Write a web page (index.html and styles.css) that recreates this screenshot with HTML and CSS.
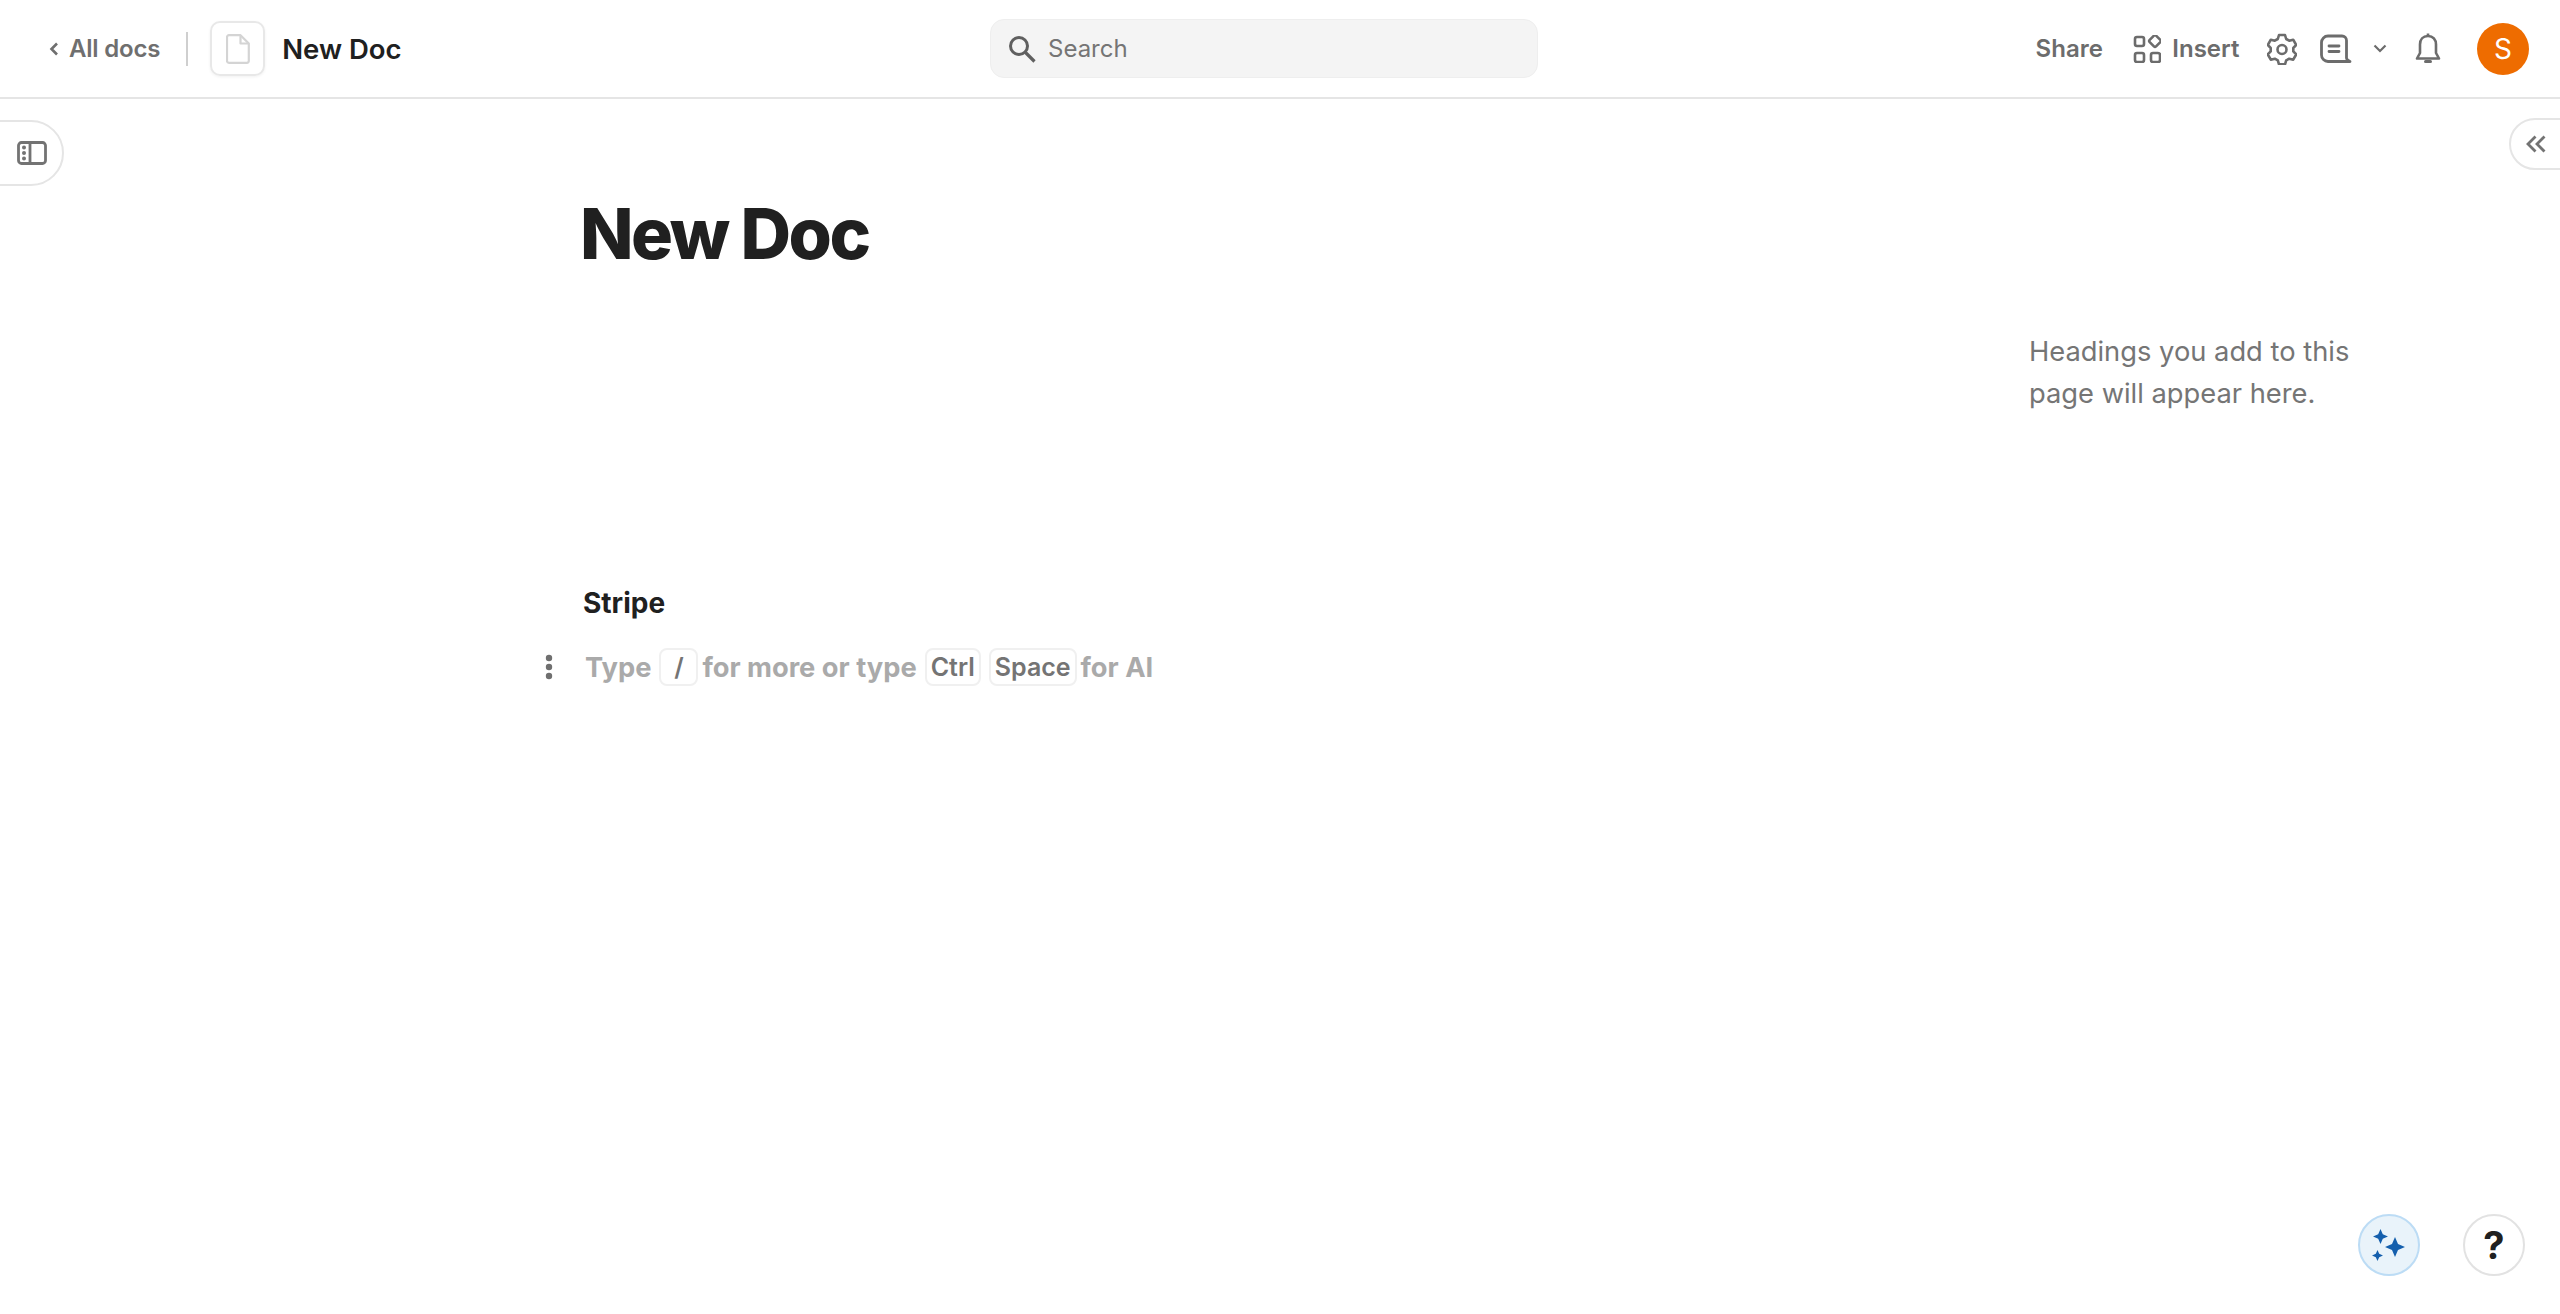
FILE: index.html
```html
<!DOCTYPE html>
<html lang="en">
<head>
<meta charset="utf-8">
<title>New Doc</title>
<link rel="stylesheet" href="styles.css">
</head>
<body>
<header class="topbar">
  <div class="top-left">
    <a class="back"><svg class="chev" width="10" height="16" viewBox="0 0 10 16"><path d="M8 2.500 2.500 8 8 13.500" fill="none" stroke="#6f6f6f" stroke-width="2.600"/></svg>All docs</a>
    <span class="vdiv"></span>
    <span class="docbox"><svg width="24" height="30" viewBox="0 0 24 30" fill="none" stroke="#d4d4d4" stroke-width="2.200" stroke-linejoin="round"><path d="M3 1.200h11.500l8.300 8.300V26.800a2 2 0 0 1-2 2H3a2 2 0 0 1-2-2V3.200a2 2 0 0 1 2-2Z"/><path d="M14.500 1.500v8h8"/></svg></span>
    <span class="docname">New Doc</span>
  </div>
  <div class="search">
    <svg width="28" height="28" viewBox="0 0 28 28"><circle cx="11" cy="11" r="8.500" fill="none" stroke="#5f5f5f" stroke-width="3"/><path d="m17.500 17.500 9 9" stroke="#5f5f5f" stroke-width="3.200" fill="none"/></svg>
    <span>Search</span>
  </div>
  <div class="top-right">
    <span class="share">Share</span>
    <span class="insert">
      <svg width="28" height="28" viewBox="0 0 28 28" fill="none" stroke="#6c6c6c" stroke-width="2.600"><rect x="2" y="2" width="9" height="9" rx="2"/><rect x="2" y="18" width="9" height="9" rx="2"/><rect x="18" y="18" width="9" height="9" rx="2"/><rect x="17.500" y="1.500" width="9" height="9" rx="1.500" transform="rotate(45 22 6)"/></svg>
      Insert
    </span>
    <svg class="gear" width="30" height="32" viewBox="0 0 30 32" fill="none" stroke="#6c6c6c" stroke-width="2.600" stroke-linejoin="round"><path d="M12 2h6l1.200 4 3 1.700 4-1 3 5.300-2.900 3v3.400l2.900 3-3 5.300-4-1-3 1.700-1.200 4h-6l-1.200-4-3-1.700-4 1-3-5.300 2.900-3V15l-2.900-3 3-5.300 4 1 3-1.700Z"/><circle cx="15" cy="16.500" r="4.500"/></svg>
    <svg class="comment" width="32" height="30" viewBox="0 0 32 30" fill="none" stroke="#6c6c6c" stroke-width="2.800" stroke-linecap="round" stroke-linejoin="round"><path d="M8 2h14a4.500 4.500 0 0 1 4.500 4.500V24c0 1.500 1.500 2.500 3.500 3.500H8a6.500 6.500 0 0 1-6.500-6.500V8.500A6.500 6.500 0 0 1 8 2Z"/><path d="M9 12h10M9 17.500h10"/></svg>
    <svg class="caret" width="14" height="10" viewBox="0 0 14 10" fill="none" stroke="#6c6c6c" stroke-width="2.200"><path d="m1.500 1.500 5.500 5.500 5.500-5.500"/></svg>
    <svg class="bell" width="26" height="32" viewBox="0 0 26 32" fill="none" stroke="#6c6c6c" stroke-width="2.600" stroke-linejoin="round"><path d="M13 3c-5 0-8 3.500-8 8.500v8.500L2 25.500h22L21 20v-8.500C21 6.500 18 3 13 3Z"/><path d="M13 .5V3"/><path d="M10.500 28.500h5" stroke-width="3" stroke-linecap="round"/></svg>
    <span class="avatar">S</span>
  </div>
</header>

<button class="toggle toggle-left"><svg width="30" height="24" viewBox="0 0 30 24" fill="none" stroke="#737373" stroke-width="2.800"><rect x="1.500" y="1.500" width="27" height="21" rx="3"/><path d="M13 1.500v21"/><g fill="#737373" stroke="none"><circle cx="7" cy="6.500" r="2"/><circle cx="7" cy="12" r="2"/><circle cx="7" cy="17.500" r="2"/></g></svg></button>
<button class="toggle toggle-right"><svg width="20" height="18" viewBox="0 0 20 18" fill="none" stroke="#737373" stroke-width="2.800"><path d="M9.500 1.500 2 9l7.500 7.500M18.500 1.500 11 9l7.500 7.500"/></svg></button>

<main class="page">
  <article class="doc">
    <h1 class="title">New Doc</h1>
    <p class="stripe">Stripe</p>
    <div class="line">
      <svg class="handle" width="8" height="26" viewBox="0 0 8 26" fill="#6f6f6f"><circle cx="4" cy="4" r="3.200"/><circle cx="4" cy="13" r="3.200"/><circle cx="4" cy="22" r="3.200"/></svg>
      <span>Type</span><kbd class="key key-slash">/</kbd><span>for more or type</span><kbd class="key">Ctrl</kbd><kbd class="key">Space</kbd><span>for AI</span>
    </div>
  </article>
  <aside class="outline">Headings you add to this page will appear here.</aside>
</main>

<div class="fabs">
  <button class="fab fab-ai"><svg width="34" height="33" viewBox="0 0 34 33" fill="#145fad"><path d="M23 8 26 15 33 18 26 21 23 28 20 21 13 18 20 15Z"/><path d="M8.500 0 10.800 5.200 16 7.500 10.800 9.800 8.500 15 6.200 9.800 1 7.500 6.200 5.200Z"/><path d="M5.500 21 7.200 24.800 11 26.500 7.200 28.200 5.500 32 3.800 28.200 0 26.500 3.800 24.800Z"/></svg></button>
  <button class="fab fab-help">?</button>
</div>
</body>
</html>
```

FILE: styles.css
```css
* { box-sizing: border-box; }
html, body { margin: 0; height: 100%; }
body {
  position: relative;
  height: 1314px;
  overflow: hidden;
  background: #fff;
  color: #202020;
  font-family: Inter, "Liberation Sans", sans-serif;
}
.topbar {
  display: grid;
  grid-template-columns: 941px 548px 1fr;
  align-items: center;
  height: 99px;
  border-bottom: 2px solid #e5e5e5;
  padding: 0 31px 0 49px;
}
.top-left { display: flex; align-items: center; }
.back {
  display: flex;
  align-items: center;
  gap: 10px;
  font-size: 24px;
  font-weight: 600;
  letter-spacing: -0.2px;
  color: #6f6f6f;
}
.vdiv { width: 2px; height: 34px; background: #cfcfcf; margin: 0 22px 0 26px; }
.docbox {
  display: flex;
  align-items: center;
  justify-content: center;
  width: 55px;
  height: 55px;
  border: 2px solid #e8e8e8;
  border-radius: 10px;
  box-shadow: 0 1px 3px rgba(0,0,0,.06);
}
.docname { margin-left: 17px; font-size: 27.500px; font-weight: 600; color: #202020; }
.search {
  display: flex;
  align-items: center;
  gap: 12px;
  height: 59px;
  padding-left: 17px;
  background: #f4f4f4;
  border: 1px solid #eeeeee;
  border-radius: 14px;
  font-size: 24px;
  color: #757575;
}
.top-right { display: flex; align-items: center; justify-content: flex-end; }
.share, .insert { font-size: 24px; font-weight: 600; color: #6c6c6c; }
.insert { display: flex; align-items: center; gap: 11px; margin-left: 30.500px; }
.gear { margin-left: 27.500px; }
.comment { margin-left: 23px; }
.caret { margin-left: 21px; }
.bell { margin-left: 28px; }
.avatar {
  display: flex;
  align-items: center;
  justify-content: center;
  width: 52px;
  height: 52px;
  margin-left: 36px;
  border-radius: 50%;
  background: #ee6c00;
  color: #fff;
  font-size: 28px;
}
.toggle {
  position: absolute;
  display: flex;
  align-items: center;
  padding: 0;
  background: #fff;
  border: 2px solid #e5e5e5;
}
.toggle-left {
  left: -2px;
  top: 120px;
  width: 66px;
  height: 66px;
  padding-left: 17px;
  border-radius: 0 33px 33px 0;
}
.toggle-right {
  left: 2509px;
  top: 118px;
  width: 60px;
  height: 52px;
  padding-left: 15px;
  border-radius: 26px 0 0 26px;
}
.page {
  display: grid;
  grid-template-columns: 2029px 330px;
}
.doc { padding-left: 580px; }
.title {
  margin: 83px 0 0;
  height: 104px;
  line-height: 104px;
  font-size: 70px;
  font-weight: 800;
  letter-spacing: -2.500px;
  color: #202020;
}
.stripe {
  margin: 297px 0 0 3px;
  height: 40px;
  line-height: 40px;
  font-size: 28px;
  font-weight: 700;
  color: #202020;
}
.line {
  position: relative;
  display: flex;
  align-items: center;
  gap: 4px;
  margin: 24px 0 0 5px;
  height: 40px;
  font-size: 27.300px;
  font-weight: 700;
  color: #aaaaaa;
}
.handle { position: absolute; left: -40px; top: 7px; }
.key {
  display: flex;
  align-items: center;
  justify-content: center;
  height: 38px;
  margin-left: 4px;
  padding: 0 4px;
  border: 2px solid #f0f0f0;
  border-radius: 8px;
  font-family: inherit;
  font-size: 25px;
  font-weight: 600;
  color: #747474;
}
.key-slash { width: 39px; }
.outline {
  margin-top: 232px;
  font-size: 27.300px;
  line-height: 42px;
  color: #757575;
}
.fabs {
  position: absolute;
  right: 35px;
  bottom: 38px;
  display: flex;
  gap: 43px;
}
.fab {
  display: flex;
  align-items: center;
  justify-content: center;
  width: 62px;
  height: 62px;
  padding: 0;
  border-radius: 50%;
  font-family: inherit;
}
.fab-ai { background: #e9f3fa; border: 2px solid #bcdcf5; }
.fab-help {
  background: #fff;
  border: 2px solid #e2e2e2;
  font-size: 38px;
  font-weight: 700;
  color: #202020;
}
```
